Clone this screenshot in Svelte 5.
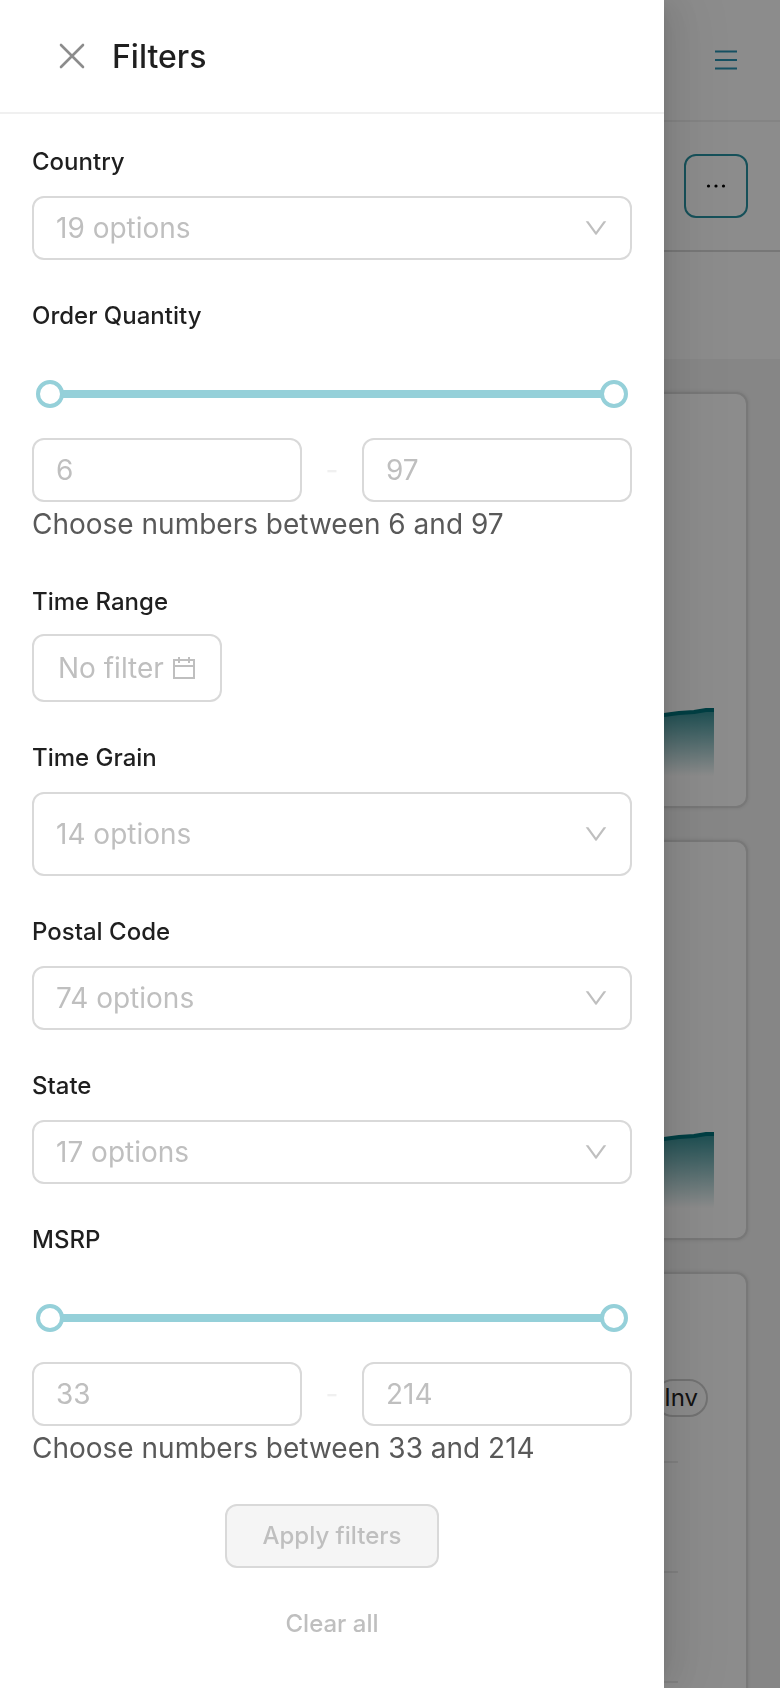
<script>
  let quantity = $state([6, 97]);
  let msrp = $state([33, 214]);
</script>

{#snippet picker(id, label, placeholder, tall)}
  <section class="field">
    <label class="label" for={id}>{label}</label>
    <div class="select" class:tall>
      <select {id}>
        <option value="">{placeholder}</option>
      </select>
      <svg class="chevron" viewBox="64 64 896 896" width="24" height="24" fill="currentColor" aria-hidden="true">
        <path d="M884 256h-75c-5.100 0-9.900 2.500-12.900 6.600L512 654.200 227.900 262.600c-3-4.100-7.800-6.600-12.900-6.600h-75c-6.500 0-10.300 7.400-6.500 12.700l352.600 486.100c12.800 17.600 39 17.600 51.700 0l352.600-486.100c3.900-5.300.1-12.700-6.400-12.700z" />
      </svg>
    </div>
  </section>
{/snippet}

{#snippet range(id, label, min, max, values)}
  <section class="field" role="group" aria-labelledby="{id}-label">
    <span class="label" id="{id}-label">{label}</span>
    <div class="slider">
      <span class="rail"></span>
      <input type="range" {min} {max} bind:value={values[0]} aria-label="{label} minimum" />
      <input type="range" {min} {max} bind:value={values[1]} aria-label="{label} maximum" />
    </div>
    <div class="bounds">
      <input type="text" inputmode="numeric" placeholder={min} aria-label="{label} from" />
      <span class="dash">-</span>
      <input type="text" inputmode="numeric" placeholder={max} aria-label="{label} to" />
    </div>
    <p class="hint">Choose numbers between {min} and {max}</p>
  </section>
{/snippet}

{#snippet trend(id, height)}
  <svg class="trend" viewBox="0 0 680 {height}" {height} preserveAspectRatio="xMaxYMin slice" aria-hidden="true">
    <defs>
      <linearGradient {id} x1="0" y1="0" x2="0" y2="1">
        <stop offset="0" stop-color="#00727a" stop-opacity="0.8" />
        <stop offset="1" stop-color="#00727a" stop-opacity="0" />
      </linearGradient>
    </defs>
    <path d="M0 40L300 24L630 7L645 5L660 4L672 2H680V{height}H0Z" fill="url(#{id})" />
    <path d="M0 40L300 24L630 7L645 5L660 4L672 2H680" fill="none" stroke="#00727a" stroke-width="4" />
  </svg>
{/snippet}

<div class="page">
  <header class="navbar">
    <button class="menu" aria-label="Menu">
      <svg viewBox="0 0 22 20" width="22" height="20" stroke="currentColor" stroke-width="2.200" aria-hidden="true">
        <path d="M0 1.500H22M0 10H22M0 18.500H22" />
      </svg>
    </button>
  </header>
  <div class="titlebar">
    <button class="more" aria-label="More actions">
      <svg viewBox="0 0 20 4" width="20" height="4" fill="currentColor" aria-hidden="true">
        <circle cx="2.500" cy="2" r="1.600" /><circle cx="10" cy="2" r="1.600" /><circle cx="17.500" cy="2" r="1.600" />
      </svg>
    </button>
  </div>
  <div class="strip"></div>
  <main class="cards">
    <article class="card first">{@render trend('trend-a', 68)}</article>
    <article class="card second">{@render trend('trend-b', 76)}</article>
    <article class="card third">
      <span class="pill">Inv</span>
      <div class="grid"><i></i><i></i><i></i></div>
    </article>
  </main>
</div>

<div class="mask"></div>

<aside class="drawer" role="dialog" aria-labelledby="drawer-title">
  <header class="head">
    <button class="close" aria-label="Close">
      <svg viewBox="0 0 32 32" width="32" height="32" fill="none" stroke="currentColor" stroke-width="2.600" stroke-linecap="round" aria-hidden="true">
        <path d="M5 5L27 27M27 5L5 27" />
      </svg>
    </button>
    <h1 id="drawer-title">Filters</h1>
  </header>
  <form class="body" onsubmit={(e) => e.preventDefault()}>
    {@render picker('country', 'Country', '19 options', false)}
    {@render range('quantity', 'Order Quantity', 6, 97, quantity)}
    <section class="field">
      <label class="label near" for="time-range">Time Range</label>
      <button type="button" class="time" id="time-range">
        No filter
        <svg viewBox="0 0 24 24" width="24" height="24" fill="none" stroke="currentColor" stroke-width="2" aria-hidden="true">
          <path d="M2 4H22V22H2ZM2 10H22M7 1V7M17 1V7" />
        </svg>
      </button>
    </section>
    {@render picker('grain', 'Time Grain', '14 options', true)}
    {@render picker('postal', 'Postal Code', '74 options', false)}
    {@render picker('state', 'State', '17 options', false)}
    {@render range('msrp', 'MSRP', 33, 214, msrp)}
    <footer class="actions">
      <button class="apply" disabled>Apply filters</button>
      <button type="button" class="clear" disabled>Clear all</button>
    </footer>
  </form>
</aside>

<style>
  :global(body) {
    margin: 0;
    background: #f5f5f5;
    font-family: Inter, "Liberation Sans", sans-serif;
  }
  * {
    box-sizing: border-box;
  }
  button,
  input,
  select {
    font: inherit;
    margin: 0;
  }

  .page {
    height: 100vh;
    overflow: hidden;
    display: flex;
    flex-direction: column;
  }
  .navbar,
  .titlebar {
    display: flex;
    align-items: center;
    justify-content: flex-end;
    background: #fff;
    flex: none;
  }
  .navbar {
    height: 122px;
    padding-right: 43px;
    border-bottom: 2px solid #f0f0f0;
  }
  .menu {
    display: flex;
    padding: 0;
    border: 0;
    background: none;
    color: #2893b3;
  }
  .titlebar {
    height: 130px;
    padding-right: 32px;
    border-bottom: 2px solid #d9d9d9;
  }
  .more {
    display: flex;
    align-items: center;
    justify-content: center;
    width: 64px;
    height: 64px;
    padding: 0;
    border: 2px solid #2893a3;
    border-radius: 12px;
    background: none;
    color: #000;
  }
  .strip {
    height: 107px;
    background: #fff;
    flex: none;
  }
  .cards {
    display: flex;
    flex-direction: column;
    gap: 32px;
    padding: 33px 32px 0;
  }
  .card {
    flex: none;
    display: flex;
    flex-direction: column;
    align-items: flex-end;
    padding: 0 32px;
    border: 2px solid #dadada;
    border-radius: 12px;
    background: #fff;
    box-shadow: 0 0 4px rgba(0, 0, 0, 0.12);
  }
  .first {
    height: 416px;
    justify-content: flex-end;
    padding-bottom: 30px;
  }
  .second {
    height: 400px;
    justify-content: flex-end;
    padding-bottom: 30px;
  }
  .third {
    height: 640px;
    padding-top: 105px;
    padding-right: 38px;
  }
  .trend {
    width: 100%;
  }
  .pill {
    padding: 0 8px;
    border: 2px solid #d0d0d0;
    border-radius: 19px;
    font-size: 24px;
    line-height: 34px;
    color: #222;
  }
  .grid {
    align-self: stretch;
    display: flex;
    flex-direction: column;
    gap: 108px;
    padding: 44px 30px 0 0;
  }
  .grid i {
    height: 2px;
    background: #ebebeb;
  }

  .mask {
    position: fixed;
    inset: 0;
    background: rgba(0, 0, 0, 0.45);
  }
  .drawer {
    position: fixed;
    inset: 0 116px 0 0;
    display: flex;
    flex-direction: column;
    background: #fff;
    box-shadow:
      12px 0 32px rgba(0, 0, 0, 0.08),
      6px 0 12px -8px rgba(0, 0, 0, 0.12),
      18px 0 56px 16px rgba(0, 0, 0, 0.05);
  }
  .head {
    display: flex;
    align-items: center;
    gap: 24px;
    height: 114px;
    flex: none;
    padding: 0 56px;
    border-bottom: 2px solid #f0f0f0;
  }
  .close {
    display: flex;
    padding: 0;
    border: 0;
    background: none;
    color: #8c8c8c;
  }
  h1 {
    margin: 0;
    padding-top: 2px;
    font-size: 32px;
    font-weight: 500;
    line-height: 48px;
    color: #1f1f1f;
  }
  .body {
    flex: 1;
    display: flex;
    flex-direction: column;
    gap: 40px;
    padding: 32px;
    overflow-y: auto;
  }
  .field {
    display: flex;
    flex-direction: column;
    align-items: stretch;
  }
  .label {
    margin-bottom: 18px;
    font-size: 24px;
    font-weight: 500;
    line-height: 32px;
    color: #1f1f1f;
  }
  .near {
    margin-bottom: 16px;
  }
  .select {
    display: grid;
    align-items: center;
    height: 64px;
  }
  .tall {
    height: 84px;
  }
  .select > * {
    grid-area: 1 / 1;
  }
  select,
  .bounds input {
    appearance: none;
    width: 100%;
    height: 100%;
    padding: 0 22px;
    border: 2px solid #d9d9d9;
    border-radius: 12px;
    background: #fff;
    font-size: 28px;
    color: #bfbfbf;
  }
  .chevron {
    justify-self: end;
    margin-right: 24px;
    color: #bfbfbf;
    pointer-events: none;
  }
  .slider {
    display: grid;
    align-items: center;
    height: 88px;
    padding: 0 4px;
  }
  .slider > * {
    grid-area: 1 / 1;
  }
  .rail {
    height: 8px;
    margin: 0 14px;
    background: #95d0d9;
  }
  .slider input {
    appearance: none;
    width: 100%;
    height: 28px;
    background: none;
    pointer-events: none;
  }
  .slider input::-webkit-slider-thumb {
    appearance: none;
    box-sizing: border-box;
    width: 28px;
    height: 28px;
    border: 4px solid #95d0d9;
    border-radius: 50%;
    background: #fff;
    pointer-events: auto;
  }
  .bounds {
    display: grid;
    grid-template-columns: 1fr 60px 1fr;
    align-items: center;
    height: 64px;
  }
  .bounds input::placeholder {
    color: #bfbfbf;
    opacity: 1;
  }
  .dash {
    text-align: center;
    font-size: 28px;
    color: #f0f0f0;
  }
  .hint {
    margin: 0;
    font-size: 28px;
    line-height: 44px;
    color: #595959;
  }
  .time {
    display: flex;
    align-items: center;
    align-self: flex-start;
    gap: 8px;
    height: 68px;
    padding: 0 24px;
    border: 2px solid #d9d9d9;
    border-radius: 12px;
    background: #fff;
    font-size: 28px;
    color: #bfbfbf;
  }
  .actions {
    display: flex;
    flex-direction: column;
    align-items: center;
    gap: 24px;
    margin-top: -6px;
  }
  .actions button {
    height: 64px;
    padding: 0 36px 2px;
    border: 2px solid transparent;
    border-radius: 12px;
    background: none;
    font-size: 24px;
    font-weight: 500;
    color: #bfbfbf;
  }
  .actions .apply {
    border-color: #d9d9d9;
    background: #f5f5f5;
  }
</style>
